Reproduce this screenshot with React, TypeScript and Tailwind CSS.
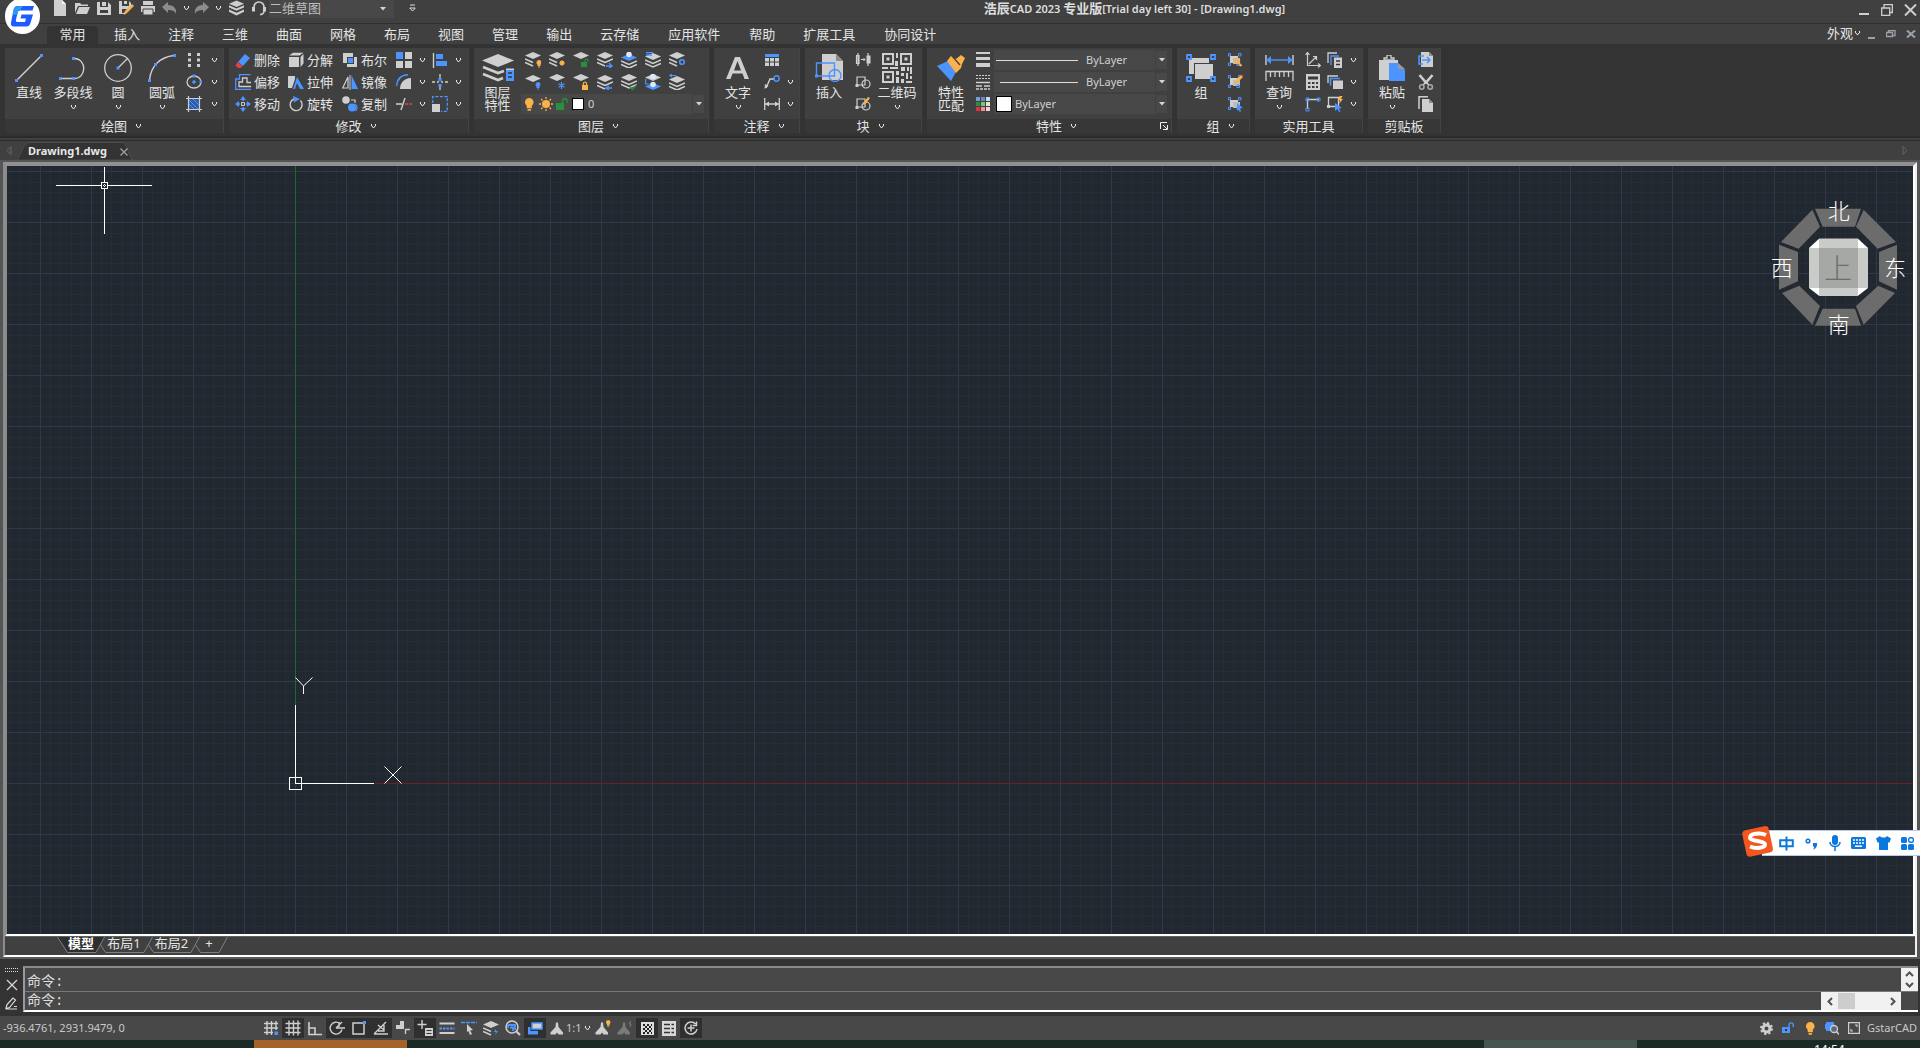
import React from "react";

type Kids = { children?: React.ReactNode };

const L = "#cfcfcf";
const B = "#4c94ff";
const O = "#fbb24a";
const G = "#25913a";
const R = "#e0414b";

function Svg({ w = 16, h = 16, box, children }: { w?: number; h?: number; box?: string } & Kids) {
  return (
    <svg width={w} height={h} viewBox={box ?? `0 0 ${w} ${h}`} fill="none" className="shrink-0" aria-hidden="true">
      {children}
    </svg>
  );
}

const Chevron = () => (
  <Svg w={7} h={5}>
    <path d="M1 .5h1M5 .5h1M1 1l2.500 3L6 1" stroke="#ececec" strokeWidth="1" />
  </Svg>
);
const Arrow = () => (
  <Svg w={6} h={4}>
    <path d="M0 0h6L3 3.500z" fill="#d6d6d6" />
  </Svg>
);

/* ---------- layer stack variants ---------- */
function Stack({ y = 0, short = false, top = L, lines = true }: { y?: number; short?: boolean; top?: string; lines?: boolean }) {
  return (
    <g transform={`translate(0 ${y})`}>
      <path d="M8 0l8 3.500L8 7 0 3.500z" fill={top} />
      {lines && (
        <path
          d={short ? "M0 7l8 3.500M0 10.500l8 3.500" : "M0 7l8 3.500 8-3.500M0 10.500l8 3.500 8-3.500"}
          stroke={L}
          strokeWidth="1.600"
        />
      )}
    </g>
  );
}
const Bulb = ({ x, y, c = O, s = 1 }: { x: number; y: number; c?: string; s?: number }) => (
  <g transform={`translate(${x} ${y}) scale(${s})`}>
    <path d="M2.500 0a2.500 2.500 0 0 1 1.500 4.500V6H1V4.500A2.500 2.500 0 0 1 2.500 0z" fill={c} />
    <path d="M1.500 6.500h2v1h-2z" fill={c} />
  </g>
);
const layerIcons: { name: string; art: React.ReactNode }[] = [
  { name: "关闭图层", art: <><Stack short /><Bulb x={11.500} y={8} /></> },
  { name: "冻结图层", art: <><Stack short /><circle cx="13" cy="11" r="2" fill={O} /><path d="M13 8v6M10 11h6M11 9l4 4M15 9l-4 4" stroke={O} /></> },
  { name: "解锁图层", art: <><Stack lines={false} /><path d="M8 10h6v5H8z" fill={G} /><path d="M12 10V8.500a1.500 1.500 0 0 1 3 0V10" stroke={G} strokeWidth="1.200" /></> },
  { name: "设为当前", art: <><Stack short /><path d="M8 10.500l8-3.500" stroke={L} strokeWidth="1.600" /><path d="M9 14h5M12 11l3 3-3 2" stroke={B} strokeWidth="1.500" /></> },
  { name: "图层隔离", art: <><Stack y={2} top={B} /><circle cx="8" cy="2.500" r="2.800" fill="#dbe9fb" /></> },
  { name: "图层浏览", art: <><Stack y={1} /><path d="M1 .7h7M1 3h6" stroke={B} strokeWidth="1.300" /></> },
  { name: "图层设置", art: <><Stack short /><circle cx="13" cy="10" r="2.300" stroke={B} strokeWidth="1.600" /></> },
  { name: "打开图层", art: <><Stack lines={false} y={1} /><Bulb x={10.500} y={8} c={B} /></> },
  { name: "解冻图层", art: <><Stack lines={false} y={0} /><path d="M12.500 8v7M9.500 9.700l6 3.500M15.500 9.700l-6 3.500" stroke={B} strokeWidth="1.200" /></> },
  { name: "锁定图层", art: <><Stack lines={false} /><path d="M9 11h6v5H9z" fill={O} /><path d="M10.500 11V9.500a1.500 1.500 0 0 1 3 0V11" stroke={O} strokeWidth="1.200" /></> },
  { name: "上一个图层", art: <><Stack y={1} short /><path d="M8 11.500l8-3.500" stroke={L} strokeWidth="1.600" /><path d="M15 14h-5M12 12l-3 2 3 2" stroke={B} strokeWidth="1.500" /></> },
  { name: "图层匹配", art: <><Stack /><path d="M9 13l2.500 2.500L16 10.500" stroke={G} strokeWidth="1.500" /></> },
  { name: "取消隔离", art: <><Stack y={0} lines={false} /><Stack y={9} lines={false} top={B} /><circle cx="8" cy="2.500" r="2.800" fill="#dbe9fb" /><circle cx="8" cy="10.500" r="2.800" fill="#dbe9fb" /><path d="M.7 5v5h3" stroke={B} strokeWidth="1.200" /></> },
  { name: "合并图层", art: <><Stack y={2} /><path d="M1 1.500h6M3 0L1 1.500 3 3" stroke={B} strokeWidth="1.200" /></> },
];

/* ---------- ribbon building blocks ---------- */
function Panel({ title, width, arrow = true, corner = false, children }: { title: string; width: string; arrow?: boolean; corner?: boolean } & Kids) {
  return (
    <section className={`${width} shrink-0 flex flex-col border-r border-[#444] bg-[#404040]`} aria-label={title}>
      <div className="flex h-[72px] pt-px">{children}</div>
      <div className="flex h-[14px] items-center bg-[#373737] leading-[14px]">
        <span className="w-4" />
        <button className="flex flex-1 items-center justify-center whitespace-nowrap">
          {title}
          {arrow && <span className="-mr-[15px] ml-2"><Chevron /></span>}
        </button>
        <span className="flex w-4 justify-end pr-[3px]">
          {corner && (
            <Svg w={8} h={8}>
              <path d="M.5 7V.5H7M3 3l4 4M7.500 3v4.500H3" stroke="#eee" />
            </Svg>
          )}
        </span>
      </div>
    </section>
  );
}
function Big({ label, second, arrow = true, width = "w-12", children }: { label: string; second?: string; arrow?: boolean; width?: string } & Kids) {
  return (
    <button className={`${width} flex shrink-0 flex-col items-center whitespace-nowrap leading-[13px]`}>
      <span className="flex h-[37px] items-center">{children}</span>
      <span>{label}{second && <br />}{second}</span>
      {!second && arrow && <span className="flex h-4 items-center"><Chevron /></span>}
    </button>
  );
}
function Col({ width = "w-5", children }: { width?: string } & Kids) {
  return <div className={`${width} flex shrink-0 flex-col`}>{children}</div>;
}
function Small({ name, label, children }: { name: string; label?: boolean } & Kids) {
  return (
    <button aria-label={name} className={label ? "flex h-[22px] items-center gap-[3px] whitespace-nowrap pl-px" : "flex h-[22px] items-center justify-center"}>
      {children}
      {label && <span className="leading-[14px]">{name}</span>}
    </button>
  );
}
const Drop = ({ name }: { name: string }) => (
  <Small name={name}><Chevron /></Small>
);

function Combo({ name, value, children }: { name: string; value: string } & Kids) {
  return (
    <div className="flex h-[22px] w-full items-center gap-px">
      <label className="flex h-5 flex-1 items-center bg-[#484848] pl-[2px]">
        {children}
        <select aria-label={name} className="min-w-0 flex-1 appearance-none bg-transparent text-[11px] text-[#d0d0d0] outline-none">
          <option>{value}</option>
        </select>
      </label>
      <span className="flex h-[18px] w-[11px] items-center justify-center bg-[#484848]"><Arrow /></span>
    </div>
  );
}

function DrawPanel() {
  return (
    <Panel title="绘图" width="w-[219px]">
      <Big label="直线" arrow={false}>
        <Svg w={28} h={28}><path d="M2 26L26 2" stroke={L} strokeWidth="1.400" /><path d="M0 25h3v3H0zM25 0h3v3h-3z" fill={B} /></Svg>
      </Big>
      <Big label="多段线" width="w-10">
        <Svg w={28} h={28}><path d="M2 24.500h13c13 0 13-20 0-20" stroke={L} strokeWidth="1.400" /><path d="M0 23h3v3H0zM13 23h3v3h-3zM13 3h3v3h-3z" fill={B} /></Svg>
      </Big>
      <Big label="圆" width="w-[50px]">
        <Svg w={28} h={28}><circle cx="14" cy="14" r="13.300" stroke={L} strokeWidth="1.300" /><path d="M14 14L24 4" stroke={L} strokeWidth="1.300" /><path d="M12.500 12.500h3v3h-3z" fill={B} /></Svg>
      </Big>
      <Big label="圆弧" width="w-[38px]">
        <Svg w={28} h={28}><path d="M1.500 26C3 12 12 3 26 1.500" stroke={L} strokeWidth="1.400" /><path d="M0 25h3v3H0zM6 9h3v3H6zM25 0h3v3h-3z" fill={B} /></Svg>
      </Big>
      <Col width="w-[26px]">
        <Small name="多点"><Svg><path d="M2 1h3v3H2zM11 1h3v3h-3zM2 6.500h3v3H2zM11 6.500h3v3h-3zM2 12h3v3H2zM11 12h3v3h-3z" fill={L} /></Svg></Small>
        <Small name="椭圆"><Svg><ellipse cx="8" cy="8" rx="7" ry="6" stroke={L} strokeWidth="1.300" /><path d="M6.500.5h3v3h-3zM13.500 6.500h2.500v3h-2.500zM7.300 6h1.400v4H7.300zM6 7.300h4v1.400H6z" fill={B} /></Svg></Small>
        <Small name="填充"><Svg><path d="M3 3h10v10H3z" fill="#2e5da8" /><path d="M3 4l9 9M3 8l5 5M7 3l6 6" stroke={B} /><path d="M2.500 0v16M13.500 0v16M0 2.500h16M0 13.500h16" stroke={L} strokeWidth="1.200" /></Svg></Small>
      </Col>
      <Col width="w-[14px]"><Drop name="多点选项" /><Drop name="椭圆选项" /><Drop name="填充选项" /></Col>
    </Panel>
  );
}

function ModifyPanel() {
  return (
    <Panel title="修改" width="w-[240px]">
      <div className="flex pl-[5px]">
        <Col width="w-[53px]">
          <Small label name="删除"><Svg><path d="M10 2l5 4-7 8-5-4z" fill={B} /><path d="M2.500 10l5 4-2 2H3l-2.500-2.500z" fill={R} /></Svg></Small>
          <Small label name="偏移"><Svg><path d="M15.500 .7H4.500V5H.7v10.300h15.300" stroke={B} strokeWidth="1.300" /><path d="M16 12.500H4V8h3.500V4H12v4.500h4" stroke={L} strokeWidth="1.300" /></Svg></Small>
          <Small label name="移动"><Svg><path d="M8 1v4M8 11v4M1 8h4M11 8h4" stroke={B} strokeWidth="1.500" /><path d="M8 0l3 4H5zM8 16l3-4H5zM0 8l4-3v6zM16 8l-4-3v6z" fill={B} /><path d="M6.500 6.500h3v3h-3z" stroke={L} /></Svg></Small>
        </Col>
        <Col width="w-[54px]">
          <Small label name="分解"><Svg><path d="M1 5h10v10H1z" fill={L} /><path d="M1 3.500L5 .7h10.500L11.500 3.500zM12.500 5L15.500 2v9.500L12.500 15z" fill={L} /></Svg></Small>
          <Small label name="拉伸"><Svg><path d="M0 2h7v3L4 14H0z" fill={L} /><path d="M9 3l7 12h-4L9 9l-2 6H5z" fill={B} /></Svg></Small>
          <Small label name="旋转"><Svg><path d="M6 3a6 6 0 1 0 6.500 1.500" stroke={L} strokeWidth="1.400" /><path d="M5 0l7 3-6 3.500z" fill={B} /></Svg></Small>
        </Col>
        <Col width="w-[54px]">
          <Small label name="布尔"><Svg><path d="M1 1h10v4H5v6H1zM12 5h3v10H5v-3h7z" fill={L} /><path d="M6 6h5v5H6z" fill={B} /></Svg></Small>
          <Small label name="镜像"><Svg><path d="M6 3v11H.7z" stroke={L} strokeWidth="1.200" /><path d="M8 1v15" stroke={L} /><path d="M9.500 1L16 15H9.500z" fill={B} /></Svg></Small>
          <Small label name="复制"><Svg><circle cx="4" cy="4" r="3.800" fill={L} /><path d="M9 4h4v3" stroke={L} strokeWidth="1.200" /><circle cx="10" cy="11.500" r="4" fill={B} /><path d="M13 8a4 4 0 0 1 0 7" stroke={B} strokeWidth="1.200" /></Svg></Small>
        </Col>
        <Col width="w-[18px]">
          <Small name="阵列"><Svg><path d="M0 0h7v7H0z" fill={B} /><path d="M9 0h7v7H9zM0 9h7v7H0zM9 9h7v7H9z" fill={L} /></Svg></Small>
          <Small name="圆角"><Svg><path d="M.7 12C1 5 5 1 12 .7" stroke={B} strokeWidth="1.400" /><path d="M4 15c0-6 4-11 11-11v11z" fill={L} /></Svg></Small>
          <Small name="修剪"><Svg><path d="M0 8h6M5 14L9 2" stroke={L} strokeWidth="1.400" /><path d="M9 8h3M13 8h3" stroke={R} strokeWidth="1.400" /></Svg></Small>
        </Col>
        <Col width="w-[19px]"><Drop name="阵列选项" /><Drop name="圆角选项" /><Drop name="修剪选项" /></Col>
        <Col width="w-[16px]">
          <Small name="对齐"><Svg><path d="M1.500 1v15" stroke={L} strokeWidth="1.400" /><path d="M4 2h7v5H4zM4 9h11v5H4z" fill={B} /></Svg></Small>
          <Small name="打断"><Svg><path d="M8 0v4M8 12v4M0 8h3M5 8h2M9 8h2M13 8h3" stroke={L} strokeWidth="1.300" /><path d="M6.500 4h3v3h-3zM6.500 10h3v3h-3z" fill={B} /></Svg></Small>
          <Small name="缩放"><Svg><path d="M.7 7V.7h14.600v14.600H9" stroke={B} strokeWidth="1.300" strokeDasharray="3 1.500" /><path d="M0 8h8v8H0z" fill={L} /></Svg></Small>
        </Col>
        <Col width="w-[20px]"><Drop name="对齐选项" /><Drop name="打断选项" /><Drop name="缩放选项" /></Col>
      </div>
    </Panel>
  );
}

const Sun = () => (
  <Svg w={14} h={14}>
    <circle cx="7" cy="7" r="4" fill={O} />
    <path d="M7 0v2M7 12v2M0 7h2M12 7h2M2 2l1.500 1.500M10.500 10.500L12 12M12 2l-1.500 1.500M3.500 10.500L2 12" stroke={O} strokeWidth="1.300" />
  </Svg>
);

function LayerPanel() {
  return (
    <Panel title="图层" width="w-[235px]">
      <Big label="图层" second="特性" width="w-[47px]">
        <Svg w={32} h={28}>
          <path d="M16 0l16 6.500L16 13 0 6.500z" fill={L} />
          <path d="M1 13l15 6 6-2M1 20l15 6 5-2" stroke={L} strokeWidth="2.600" />
          <path d="M24 15h8v12h-8z" fill={B} /><path d="M24 14.500h8v1.500h-8z" fill={L} />
          <path d="M26 19h4M26 23h4" stroke="#333" strokeWidth="1.500" />
        </Svg>
      </Big>
      <div className="flex flex-1 flex-col pr-1">
        <div className="grid w-[168px] grid-cols-7">
          {layerIcons.map((i) => (
            <Small key={i.name} name={i.name}><Svg>{i.art}</Svg></Small>
          ))}
        </div>
        <Combo name="当前图层" value="0">
          <span className="mr-1 flex shrink-0 items-center gap-[3px] pl-[2px]">
            <Svg w={11} h={13}><Bulb x={0} y={0} s={1.700} /></Svg>
            <Sun />
            <Svg w={12} h={12}><path d="M0 5h8v7H0z" fill={G} /><path d="M6.500 5V3a2.300 2.300 0 0 1 4.600 0v2" stroke={G} strokeWidth="1.400" /></Svg>
            <span className="ml-px h-3 w-3 shrink-0 border border-black bg-white" />
          </span>
        </Combo>
      </div>
    </Panel>
  );
}

function AnnotatePanel() {
  return (
    <Panel title="注释" width="w-[86px]">
      <Big label="文字">
        <Svg w={24} h={24}><path d="M9 1h5l9 22h-4.500l-2-5.500h-10L4.500 23H0zM11.500 5L8 14.500h7z" fill={L} /></Svg>
      </Big>
      <Col width="w-[20px]">
        <Small name="表格"><Svg w={14} h={12}><path d="M0 0h14v3H0z" fill={B} /><path d="M0 4h4v3.500H0zM5 4h4v3.500H5zM10 4h4v3.500h-4zM0 8.500h4V12H0zM5 8.500h4V12H5zM10 8.500h4V12h-4z" fill={L} /></Svg></Small>
        <Small name="引线"><Svg><path d="M2 14l4-9h5" stroke={L} strokeWidth="1.400" /><path d="M.5 15l.5-5 3.500 2z" fill={L} /><circle cx="12.500" cy="4.500" r="2.700" stroke={B} strokeWidth="1.400" /></Svg></Small>
        <Small name="标注"><Svg><path d="M.7 2v12M15.300 2v12M1 8h14" stroke={L} strokeWidth="1.300" /><path d="M1 8l4-2.500v5zM15 8l-4-2.500v5z" fill={L} /></Svg></Small>
      </Col>
      <Col width="w-[16px]"><span className="h-[22px]" /><Drop name="引线选项" /><Drop name="标注选项" /></Col>
    </Panel>
  );
}

const ShapePair = ({ pen = false }: { pen?: boolean }) => (
  <Svg>
    <path d="M2 3h8v8H2z" stroke={L} strokeWidth="1.200" />
    <circle cx="11" cy="10" r="4" stroke={L} strokeWidth="1.200" />
    <path d="M.5 10h3v3h-3z" fill={L} />
    {pen && <path d="M8 9l1-3 4-5 2 1-4 5.500z" fill={O} />}
  </Svg>
);

function BlockPanel() {
  return (
    <Panel title="块" width="w-[117px]">
      <Big label="插入" arrow={false}>
        <Svg w={28} h={28}>
          <path d="M7 0h14l7 7v19H7z" fill={L} /><path d="M21 0l7 7h-7z" fill="#8d8d8d" />
          <path d="M1.500 9h18v13h-18z" stroke={B} strokeWidth="1.400" /><circle cx="20" cy="21.500" r="6" stroke={B} strokeWidth="1.400" />
          <path d="M0 20.500h3v3H0z" fill={B} />
        </Svg>
      </Big>
      <Col width="w-[20px]">
        <Small name="替换块"><Svg><path d="M1.500 3.500h2.500v8H1.500zM3 1v13M13 1v13" stroke={L} strokeWidth="1.200" /><path d="M11.500 3.500h4v8h-4z" fill={L} /><path d="M6 7.500h4M8.500 6l1.500 1.500L8.500 9" stroke={L} /></Svg></Small>
        <Small name="创建块"><ShapePair /></Small>
        <Small name="编辑块"><ShapePair pen /></Small>
      </Col>
      <Big label="二维码">
        <Svg w={30} h={30}>
          <path d="M1 1h10v10H1zM19 1h10v10H19zM1 19h10v10H1z" stroke={L} strokeWidth="2" />
          <path d="M4.500 4.500h3v3h-3zM22.500 4.500h3v3h-3zM4.500 22.500h3v3h-3zM14 0h2v5h-2zM13 8h3v5h-3zM0 14h6v2H0zM8 14h8v2H8zM14 18h3v4h-3zM19 14h4v4h-4zM25 14h2v4h-2zM28 14h2v7h-2zM19 20h3v3h-3zM24 20h2v6h-2zM14 24h3v6h-3zM19 26h3v4h-3zM24 28h6v2h-6zM28 23h2v3h-2z" fill={L} />
        </Svg>
      </Big>
    </Panel>
  );
}

const swatches = ["#7b9bd0", "#6a86c0", "#c8d8f5", "#25913a", "#80c080", "#d5f0c8", "#e0323c", "#f09090", "#f8d0d0"];

function PropertiesPanel() {
  return (
    <Panel title="特性" width="w-[245px]" corner>
      <Big label="特性" second="匹配">
        <Svg w={28} h={26}>
          <path d="M0 11l11-5 9 9-6 11z" fill={B} />
          <path d="M10 6l4-5 5 3 5-4 4 3-3 6-1 4-5 5z" fill={O} /><path d="M15 1l8 9" stroke="#404040" strokeWidth="1.200" />
        </Svg>
      </Big>
      <Col width="w-[16px]">
        <Small name="线宽"><Svg w={14} h={16}><path d="M0 0h14v2H0zM0 5h14v3H0zM0 11h14v4H0z" fill={L} /></Svg></Small>
        <Small name="线型"><Svg w={14} h={16}><path d="M0 1.500h14M0 4.500h14" stroke={L} strokeWidth="1.200" strokeDasharray="2 1" /><path d="M0 8.500h14" stroke={L} strokeWidth="1.500" /><path d="M0 12h14" stroke={L} strokeDasharray="6 2" strokeWidth="1.500" /><path d="M0 15h14" stroke={L} strokeDasharray="3 1" strokeWidth="1.500" /></Svg></Small>
        <Small name="颜色"><Svg w={14} h={14}>{swatches.map((c, i) => <rect key={c} x={(i % 3) * 5} y={Math.floor(i / 3) * 5} width="4" height="4" fill={c} />)}</Svg></Small>
      </Col>
      <div className="ml-[3px] mr-1 flex flex-1 flex-col">
        <Combo name="线宽" value="ByLayer"><span className="mr-2 h-px w-[82px] bg-[#dcdcdc]" /></Combo>
        <Combo name="线型" value="ByLayer"><span className="ml-1 mr-2 h-px w-[78px] bg-[#dcdcdc]" /></Combo>
        <Combo name="颜色" value="ByLayer"><span className="mr-[3px] h-4 w-4 border border-black bg-white" /></Combo>
      </div>
    </Panel>
  );
}

const MiniGroup = ({ kind }: { kind: "find" | "edit" | "pick" }) => (
  <Svg>
    <path d="M3 4h8v7H3z" fill={L} /><path d="M6 6h7v6H6z" fill="#bdbdbd" />
    <path d="M1.500 1.500h2V4h-2zM11.500 1.500H14V4h-2.500zM1.500 11h2v2.500h-2zM10 11h2.500v2.500H10z" stroke={B} />
    {kind === "find" && <><circle cx="10" cy="9" r="2.500" stroke={O} strokeWidth="1.500" /><path d="M11.500 11l3 3" stroke={O} strokeWidth="2" /></>}
    {kind === "edit" && <><path d="M7 10l1-3 6-6 2 2-6 6z" fill={O} /><path d="M13.500 1.500L15 0l1 1.500-1 1z" fill={R} /></>}
    {kind === "pick" && <path d="M10 7l6 5-3 .5 1 3-1.500.5-1-3L10 15z" fill={B} />}
  </Svg>
);

function GroupPanel() {
  return (
    <Panel title="组" width="w-[73px]">
      <Big label="组" arrow={false}>
        <Svg w={30} h={28}>
          <path d="M3 4h20v5H8v11H3z" fill={L} /><path d="M9 10h18v15H9z" fill={L} />
          <path d="M1 1h4v4H1zM25 1h4v4h-4zM1 23h4v4H1zM25 23h4v4h-4z" fill="#404040" stroke={B} strokeWidth="1.800" />
        </Svg>
      </Big>
      <Col width="w-[20px]">
        <Small name="解除编组"><MiniGroup kind="find" /></Small>
        <Small name="组编辑"><MiniGroup kind="edit" /></Small>
        <Small name="组选择"><MiniGroup kind="pick" /></Small>
      </Col>
    </Panel>
  );
}

function UtilityPanel() {
  return (
    <Panel title="实用工具" width="w-[108px]" arrow={false}>
      <Big label="查询">
        <Svg w={29} h={28}>
          <path d="M1 1v10M28 1v10" stroke={L} strokeWidth="1.400" /><path d="M3 6h23" stroke={B} strokeWidth="1.400" /><path d="M1 6l5-4v8zM28 6l-5-4v8z" fill={B} />
          <path d="M1 27v-9.500h27V27M5.500 18v5M10 18v5M14.500 18v5M19 18v5M23.500 18v5" stroke={L} strokeWidth="1.300" />
        </Svg>
      </Big>
      <Col width="w-[20px]">
        <Small name="坐标"><Svg><path d="M2.500 1v12.500H15M4 12l7-7M8 4.500h3.500V8M.5 3l2-2.500 2 2.500M13 11.500l2.500 2-2.500 2" stroke={L} strokeWidth="1.200" /></Svg></Small>
        <Small name="计算器"><Svg><path d="M1 0h14v16H1z" fill={L} /><path d="M3 2.500h10v3H3zM3 8h2.500v2H3zM7 8h2.500v2H7zM11 8h2v2h-2zM3 12h2.500v2H3zM7 12h2.500v2H7zM11 12h2v2h-2z" fill="#3a3a3a" /></Svg></Small>
        <Small name="点样式"><Svg><path d="M2.500 13V3.500H14" stroke={L} strokeWidth="1.300" /><path d="M1 2h3v3H1zM12 2h3v3h-3zM1 12h3v3H1z" stroke={B} /></Svg></Small>
      </Col>
      <Col width="w-[24px]">
        <Small name="选择过滤"><Svg><path d="M1 11V1h9" stroke={L} strokeWidth="1.300" /><path d="M4 13V4h8" stroke={B} strokeWidth="1.300" /><path d="M7 5.500h8V16H7z" fill={L} /><path d="M9 9h4M9 12.500h4" stroke="#333" strokeWidth="1.500" /></Svg></Small>
        <Small name="绘图次序"><Svg><path d="M1 9V2h10" stroke={L} strokeWidth="1.300" /><path d="M3.500 11.500V4.500H13" stroke={B} strokeWidth="1.600" /><path d="M6 6.500h10V15H6z" fill={L} /></Svg></Small>
        <Small name="快速选择"><Svg><path d="M1.500 1.500h10v9h-10z" stroke={L} strokeWidth="1.300" /><path d="M0 9h3v3H0z" fill={L} /><path d="M12.500 0h3l-1.500 3h2l-4 5 1-4h-2z" fill={O} /><path d="M8 7l7 5-3 .5 1.500 3-1.500.5-1.500-3L8 15z" fill={B} /></Svg></Small>
      </Col>
      <Col width="w-[13px]"><Drop name="选择过滤选项" /><Drop name="绘图次序选项" /><Drop name="快速选择选项" /></Col>
    </Panel>
  );
}

function ClipboardPanel() {
  return (
    <Panel title="剪贴板" width="w-[73px]" arrow={false}>
      <Big label="粘贴">
        <Svg w={26} h={26}>
          <path d="M0 5h19v4h-9v16H0z" fill={L} /><path d="M5 5V3h3V0h4v3h3v2z" stroke={L} strokeWidth="1.300" fill="#404040" />
          <path d="M10 8h9l7 7v11H10z" fill={B} /><path d="M19 8l7 6h-7z" fill="#9a9a9a" />
        </Svg>
      </Big>
      <Col width="w-[20px]">
        <Small name="链接复制"><Svg><path d="M3 0h8l4 4v11H3z" fill={L} /><path d="M11 0l4 4h-4z" fill="#8d8d8d" /><path d="M6 4H1v8h4M4 8h8M9 5l3 3-3 3" stroke={B} strokeWidth="1.600" /></Svg></Small>
        <Small name="剪切"><Svg><path d="M1.500 1L8 8.500 14.500 1" stroke={L} strokeWidth="2.600" /><path d="M8 8l-3 3M8 8l3 3" stroke={L} strokeWidth="1.600" /><circle cx="3.800" cy="13" r="2.200" stroke="#a8a8a8" strokeWidth="1.600" /><circle cx="12.200" cy="13" r="2.200" stroke="#a8a8a8" strokeWidth="1.600" /></Svg></Small>
        <Small name="复制剪贴"><Svg><path d="M1 13V.7h9" stroke={L} strokeWidth="1.500" /><path d="M4 3h7l4 4v9H4z" fill={L} /><path d="M11 3l4 4h-4z" fill="#8d8d8d" /></Svg></Small>
      </Col>
    </Panel>
  );
}

/* ---------- title bar ---------- */
function QuickButton({ name, width = "w-[22px]", children }: { name: string; width?: string } & Kids) {
  return <button aria-label={name} className={`${width} flex h-4 shrink-0 items-center justify-center`}>{children}</button>;
}

function TitleBar() {
  return (
    <header className="flex h-[23px] items-start pl-[49px]">
      <QuickButton name="新建"><Svg><path d="M2 0h8l4 4v12H2z" fill={L} /><path d="M10 0l4 4h-4z" fill="#f0f0f0" /></Svg></QuickButton>
      <QuickButton name="打开"><Svg><path d="M1 13V3h5l1.500 1.500H14V6H4z" fill={L} /><path d="M5 7h11l-3 7H2z" fill={L} /></Svg></QuickButton>
      <QuickButton name="保存"><Svg><path d="M1 2h3v5h8V2l3 3v10H1z" fill={L} /><path d="M6 2h4v4H6z" fill={L} /><path d="M4 10h8v3H4z" fill="#404040" /></Svg></QuickButton>
      <QuickButton name="另存为"><Svg><path d="M1 1h3v5h7V1l2 2v3l-6 8H1z" fill={L} /><path d="M6 1h3v3H6z" fill={L} /><path d="M4 9h5l-3 4H4z" fill="#404040" /><path d="M6 15l1-4 7-7 2 2-7 7z" fill={O} /></Svg></QuickButton>
      <QuickButton name="打印"><Svg><path d="M3 1h10v4H3zM1 6h14v6H1z" fill={L} /><path d="M3 9h10v6H3z" fill={L} stroke="#404040" /></Svg></QuickButton>
      <QuickButton name="放弃"><Svg><path d="M0 7l6-5v3c6 0 9 4 8 9-1-3-4-4-8-4v3z" fill="#8c8c8c" /></Svg></QuickButton>
      <QuickButton name="放弃列表" width="w-[10px]"><Chevron /></QuickButton>
      <QuickButton name="重做"><Svg><path d="M15 7L9 2v3c-6 0-9 4-8 9 1-3 4-4 8-4v3z" fill="#8c8c8c" /></Svg></QuickButton>
      <QuickButton name="重做列表" width="w-[10px]"><Chevron /></QuickButton>
      <QuickButton name="图层管理" width="w-[26px]"><Svg w={15} h={16} box="0 0 16 16"><path d="M8 0l8 3.500L8 7 0 3.500zM0 5l8 3.500L16 5v2.500L8 11 0 7.500zM0 9.500L8 13l8-3.500V12l-8 4-8-4z" fill={L} /></Svg></QuickButton>
      <QuickButton name="在线支持" width="w-[20px]"><Svg><path d="M3 10V7a5 5 0 0 1 10 0v4c0 2-2 3.500-4 3.500" stroke={L} strokeWidth="1.700" /><path d="M1 7h3v4.500H1zM12 7h3v4.500h-3z" fill={L} /></Svg></QuickButton>
      <label className="flex h-[18px] w-[125px] items-center bg-[#484848] pr-[8px]">
        <select aria-label="工作空间" className="min-w-0 flex-1 appearance-none bg-transparent pb-[2px] text-[13px] leading-4 text-[#bdbdbd] outline-none">
          <option>二维草图</option>
        </select>
        <Arrow />
      </label>
      <QuickButton name="自定义快速访问" width="w-[36px]"><Svg w={7} h={8}><path d="M1 1h5" stroke="#ddd" /><path d="M.7 4h5.600L3.500 7z" stroke="#ddd" /></Svg></QuickButton>
      <h1 className="flex-1 pr-5 text-center text-[13px] font-semibold leading-4 text-[#dedede]">
        浩辰<span className="text-[11px]">CAD 2023 </span>专业版<span className="text-[11px]">[Trial day left 30] - [Drawing1.dwg]</span>
      </h1>
      <div className="flex h-[19px] items-center gap-[11px] pr-[3px]">
        <button aria-label="最小化"><Svg w={11} h={12}><path d="M0 10h10" stroke={L} strokeWidth="2" /></Svg></button>
        <button aria-label="还原"><Svg w={12} h={12}><path d="M.7 4h8v7.300h-8zM3 3.500V.7h8.300v7.800H9" stroke={L} strokeWidth="1.300" /></Svg></button>
        <button aria-label="关闭"><Svg w={13} h={12}><path d="M1 .5l11 11M12 .5l-11 11" stroke={L} strokeWidth="2" /></Svg></button>
      </div>
    </header>
  );
}

const menus = ["常用", "插入", "注释", "三维", "曲面", "网格", "布局", "视图", "管理", "输出", "云存储", "应用软件", "帮助", "扩展工具", "协同设计"];

function MenuBar() {
  return (
    <nav className="flex h-[21px] items-end border-t border-[#303030] pl-[47px] pr-1">
      {menus.map((m, i) => (
        <button
          key={m}
          className={
            i === 0
              ? "h-[18px] w-[51px] rounded-t bg-[#333] pb-[2px] leading-4"
              : i === 1
                ? "h-[18px] pb-[2px] pl-4 pr-[14px] leading-4"
                : m.length > 2
                  ? "h-[18px] pb-[2px] pl-[14px] pr-[15px] leading-4"
                  : "h-[18px] px-[14px] pb-[2px] leading-4"
          }
        >
          {m}
        </button>
      ))}
      <div className="ml-auto flex h-5 items-center">
        <button className="flex items-center gap-px pb-[2px] leading-4">外观<Chevron /></button>
        <div className="flex items-center gap-[10px] pl-[7px] text-[#9aa3ad]">
          <button aria-label="最小化图形"><Svg w={8} h={9}><path d="M0 8h7" stroke="#9aa3ad" strokeWidth="2" /></Svg></button>
          <button aria-label="还原图形"><Svg w={10} h={8}><path d="M.5 2.500h6v4h-6zM2.500 2V.7h6.500v4.800H7" stroke="#9aa3ad" strokeWidth="1.300" /></Svg></button>
          <button aria-label="关闭图形"><Svg w={10} h={8}><path d="M1 .5l8 7M9 .5l-8 7" stroke="#9aa3ad" strokeWidth="2" /></Svg></button>
        </div>
      </div>
    </nav>
  );
}

/* ---------- drawing area ---------- */
function Grid() {
  return (
    <svg className="absolute inset-0 h-full w-full" shapeRendering="crispEdges" aria-hidden="true">
      <defs>
        <pattern id="grid" x="33" y="5" width="51" height="51" patternUnits="userSpaceOnUse">
          <path d="M10 0h1v51h-1zM20 0h1v51h-1zM31 0h1v51h-1zM41 0h1v51h-1zM0 11h51v1H0zM0 21h51v1H0zM0 31h51v1H0zM0 41h51v1H0z" fill="#262d38" />
          <path d="M0 0h1v51H0zM0 0h51v1H0z" fill="#30384c" />
        </pattern>
      </defs>
      <rect width="100%" height="100%" fill="url(#grid)" />
      <rect x="288" y="0" width="1" height="617" fill="#1c6b22" />
      <rect x="288" y="617" width="100%" height="1" fill="#6b2226" />
      <rect x="288" y="539" width="1" height="78" fill="#fff" />
      <rect x="288" y="617" width="79" height="1" fill="#fff" />
      <rect x="282.500" y="611.500" width="12" height="12" fill="none" stroke="#fff" />
      <path d="M288.500 511.500l8 8.500 9-8.500M296.500 520v8M377.500 600.500l17 17M394.500 600.500l-17 17" stroke="#fff" fill="none" shapeRendering="auto" />
      <path d="M49 19h45v1H49zM101 19h44v1h-44zM97 1h1v16h-1zM97 23h1v45h-1z" fill="#fff" />
      <path d="M94.500 16.500h6v6h-6zM96 19.500h1M98 19.500h1M97.500 18v1M97.500 20v1" stroke="#fff" fill="none" />
    </svg>
  );
}

function Compass() {
  return (
    <svg width="145" height="150" viewBox="135 40 435 450" className="absolute right-[3px] top-[27px]" role="img" aria-label="视图方向">
      <g fill="#6c6c6c">
        <path d="M285 87h138l-18 54H308zM285 438h138l-18-51H308z" />
        <path d="M177 195l57 22v88l-57 25zM531 195l-54 22v88l54 25z" />
        <path d="M277 90l23 51-64 66-53-20zM431 90l-23 51 65 66 55-20z" />
        <path d="M277 435l23-56-62-61-52 22zM431 435l-23-56 67-61 50 22z" />
      </g>
      <path d="M297 177h117l30 28v120l-30 23H297l-30-23V205z" fill="#fff" />
      <path d="M297 177h117v171H297zM267 205h177v120H267z" fill="#c9cbc9" />
      <path d="M297 205h117v120H297z" fill="#a6a8a6" />
      <g fontFamily="'Noto Sans CJK SC', sans-serif" fontWeight="300" fontSize="66" textAnchor="middle" fill="#fff">
        <text x="356" y="118">北</text>
        <text x="356" y="461">南</text>
        <text x="185" y="288">西</text>
        <text x="526" y="288">东</text>
        <text x="354" y="298" fontSize="84" fill="#6c6e6c">上</text>
      </g>
    </svg>
  );
}

function InputMethodBar() {
  const c = "#0a78dc";
  return (
    <div className="absolute -right-[7px] bottom-[78px] z-10 flex h-[26px] w-[158px] items-center justify-between border-y border-[#b9cbe6] bg-white pl-[17px] pr-[6px]">
      <span className="absolute -left-[21px] -top-[6px]">
        <Svg w={34} h={34}>
          <rect x="3" y="3" width="27" height="27" rx="4" fill="#f2571f" transform="rotate(-12 16 16)" />
          <path d="M25 10c-6-3-16-1-16 2.500 0 4 15 3 15 7 0 3.500-9 4.500-15 2" stroke="#fff" strokeWidth="4" fill="none" />
        </Svg>
      </span>
      <button aria-label="中文"><Svg w={15} h={15}><path d="M1.200 4.200h12.600v6H1.200zM7.500 .5v14" stroke={c} strokeWidth="2" /></Svg></button>
      <button aria-label="标点"><Svg w={15} h={15}><circle cx="4" cy="5" r="1.800" stroke={c} strokeWidth="1.500" /><path d="M9 7h4c.5 3-1 6-4 6.500 1-1 1.500-2 1-3H9z" fill={c} /></Svg></button>
      <button aria-label="语音"><Svg w={12} h={16}><rect x="3" y="0" width="6" height="10" rx="3" fill={c} /><path d="M1 7c0 6 10 6 10 0M6 12v4" stroke={c} strokeWidth="1.600" /></Svg></button>
      <button aria-label="键盘"><Svg w={15} h={12}><rect width="15" height="12" rx="1.500" fill={c} /><path d="M2 3h11M2 6h11" stroke="#fff" strokeWidth="1.500" strokeDasharray="2 1" /><path d="M4 9.200h7" stroke="#fff" strokeWidth="1.500" /></Svg></button>
      <button aria-label="皮肤"><Svg w={15} h={14}><path d="M4 0c1 2 6 2 7 0l4 2.500-1.500 4H12V14H3V6.500H1.500L0 2.500z" fill={c} /></Svg></button>
      <button aria-label="工具箱"><Svg w={13} h={13}><rect width="6" height="6" rx="1.500" fill={c} /><rect y="7" width="6" height="6" rx="1.500" fill={c} /><rect x="7" y="7" width="6" height="6" rx="1.500" fill={c} /><rect x="7.700" y=".7" width="4.600" height="4.600" rx="1.500" stroke={c} strokeWidth="1.400" /></Svg></button>
    </div>
  );
}

function LayoutTabs() {
  const tabs = [
    { t: "模型", w: 48, box: "z-40 w-12 font-bold text-white" },
    { t: "布局1", w: 58, box: "z-30 -ml-[10px] w-[58px]" },
    { t: "布局2", w: 57, box: "z-20 -ml-[10px] w-[57px]" },
    { t: "+", w: 38, box: "z-10 -ml-[10px] w-[38px]" },
  ];
  return (
    <div className="flex h-[19px] border-t border-[#606060] bg-[#404040] pl-[52px]">
      {tabs.map((tab, i) => (
        <button key={tab.t} className={`${tab.box} relative h-4 pb-[3px] leading-[13px]`}>
          <svg width={tab.w} height="16" className="absolute inset-0" aria-hidden="true">
            <path d={`M.5 0L10.500 15.500H${tab.w - 9}L${tab.w - 0.5} 0`} fill={i === 0 ? "#2e2e2e" : "#404040"} stroke="#808080" />
          </svg>
          <span className="relative">{tab.t}</span>
        </button>
      ))}
    </div>
  );
}

/* ---------- command line ---------- */
function CommandArea() {
  return (
    <div className="mt-[7px] flex h-[46px] shrink-0 pr-[2px]">
      <div className="flex w-[23px] flex-col items-center justify-between pb-[2px] pt-[2px]">
        <Svg w={13} h={4}><path d="M0 .5h13M0 3.500h13" stroke="#ddd" strokeDasharray="1 1" /></Svg>
        <button aria-label="关闭命令行"><Svg w={12} h={12}><path d="M1 1l10 10M11 1L1 11" stroke="#d8d8d8" strokeWidth="1.300" /></Svg></button>
        <button aria-label="命令行设置"><Svg w={13} h={13}><path d="M1 11.500l1-4L8 1l2.500 2L4.500 10.500zM1 12h11M9 9.500h3" stroke="#d8d8d8" strokeWidth="1.200" /></Svg></button>
      </div>
      <div className="flex min-w-0 flex-1 flex-col border-b-2 border-l-2 border-t-2 border-b-white border-l-[#9a9a9a] border-t-[#8a8a8a] bg-[#484848] font-['Liberation_Mono','Noto_Sans_CJK_SC',monospace] text-sm text-[#dcdcdc]">
        <div className="flex h-6 border-b border-[#777]">
          <p className="flex-1 pl-[2px] pt-1 leading-5">命令:</p>
          <div className="flex w-[17px] flex-col items-center justify-around bg-[#f0f0f0]">
            <button aria-label="向上滚动" className="flex"><Svg w={9} h={6}><path d="M1 5l3.500-3.500L8 5" stroke="#505050" strokeWidth="2" /></Svg></button>
            <button aria-label="向下滚动" className="flex"><Svg w={9} h={6}><path d="M1 1l3.500 3.500L8 1" stroke="#505050" strokeWidth="2" /></Svg></button>
          </div>
        </div>
        <div className="flex h-[18px] items-center pr-[17px]">
          <label htmlFor="cmd" className="pl-[2px] leading-5">命令:</label>
          <input id="cmd" className="h-4 min-w-0 flex-1 bg-transparent outline-none" />
          <div className="flex h-full w-20 items-center bg-[#f0f0f0]">
            <button aria-label="向左滚动" className="flex w-[17px] justify-center"><Svg w={6} h={9}><path d="M5 1L1.500 4.500 5 8" stroke="#505050" strokeWidth="2" /></Svg></button>
            <span className="h-4 w-[17px] bg-[#cdcdcd]" />
            <button aria-label="向右滚动" className="ml-auto flex w-[17px] justify-center"><Svg w={6} h={9}><path d="M1 1l3.500 3.500L1 8" stroke="#505050" strokeWidth="2" /></Svg></button>
          </div>
        </div>
      </div>
    </div>
  );
}

/* ---------- status bar ---------- */
const Compass2D = ({ c = L }: { c?: string }) => (
  <path d="M6 1.500h2l.5 4.500 4.500 5.500v2H8.500L7 11.500l-1.500 2H.5v-2L5.500 6z" fill={c} />
);
const toggles: { name: string; on?: boolean; art: React.ReactNode }[] = [
  { name: "捕捉", art: <><path d="M4 1v14M8.500 1v14M13 1v9M1 3.500h14M1 8h14M1 12.500h9" stroke={L} strokeWidth="1.400" /><path d="M11.500 11.500h3.500V15h-3.500z" fill={B} /></> },
  { name: "栅格", on: true, art: <path d="M4 .5v15M8.500 .5v15M13 .5v15M.5 3.500h15M.5 8h15M.5 12.500h15" stroke={L} strokeWidth="1.400" /> },
  { name: "正交", art: <path d="M2 2v12.500h13M2 8h6v6" stroke={L} strokeWidth="1.600" /> },
  { name: "极轴", on: true, art: <><path d="M11 3.500A6 6 0 1 0 13 9.500" stroke={L} strokeWidth="1.400" /><path d="M7 8h9M7 8l6-6M10 2v5" stroke={L} strokeWidth="1.300" /></> },
  { name: "对象捕捉", on: true, art: <><path d="M2 3h11v11H2z" stroke={L} strokeWidth="1.500" /><path d="M12 1h3v3h-3z" fill={B} /></> },
  { name: "对象追踪", on: true, art: <path d="M1 14L13 2M1 14h14M5 5l6 5M11 5v6H5" stroke={L} strokeWidth="1.400" /> },
  { name: "动态UCS", art: <><path d="M5 1h4v8H1V5h4z" fill={L} /><path d="M10.500 14V9.500H15" stroke={L} strokeWidth="1.300" /></> },
  { name: "动态输入", on: true, art: <><path d="M5 0v9M.5 4.500h9" stroke={L} strokeWidth="1.400" /><path d="M8 8h8v8H8z" fill={L} /><path d="M9.500 10.500h5M9.500 13.500h5" stroke="#333" /></> },
  { name: "线宽显示", art: <><path d="M.5 3.500h15M.5 13h15" stroke={L} strokeWidth="1.800" /><path d="M.5 8.500h15" stroke={B} strokeWidth="1.800" strokeDasharray="2.500 1" /></> },
  { name: "循环选择", art: <><path d="M0 2.500h16" stroke={B} strokeWidth="1.500" strokeDasharray="4 1" /><path d="M6 4l6 6-3 .5L11 14l-2 1-1.500-4L6 12z" fill={L} /></> },
  { name: "图层状态", art: <><g transform="translate(0 1)"><Stack short /></g><path d="M13 9l-2 3h2l-1 3 3-4h-2z" fill={B} /></> },
  { name: "快速查看", art: <><circle cx="7" cy="7" r="6" stroke={L} strokeWidth="1.500" /><path d="M11 11l4 4" stroke={L} strokeWidth="2.200" /><path d="M3 5h7v5M5 7.500h3V11M3 5v3" stroke={B} strokeWidth="1.800" /></> },
  { name: "窗口", on: true, art: <><path d="M5 3h10v6H5z" fill={L} stroke={B} strokeWidth="1.500" /><path d="M1 7h2.500v4H11v3.500H1z" fill={B} /></> },
];

function Toggle({ name, on, children }: { name: string; on?: boolean } & Kids) {
  return (
    <button aria-label={name} aria-pressed={!!on} className={`${on ? "bg-[#2f2f2f]" : ""} flex h-5 w-[22px] shrink-0 items-center justify-center`}>
      {children}
    </button>
  );
}

function StatusBar() {
  return (
    <footer className="flex h-6 shrink-0 items-center bg-[#484848] pr-[3px] text-[11px] text-[#c8c8c8]">
      <span className="w-[260px] pl-[3px]">-936.4761, 2931.9479, 0</span>
      {toggles.map((t) => <Toggle key={t.name} name={t.name} on={t.on}><Svg>{t.art}</Svg></Toggle>)}
      <button className="flex w-[46px] items-center gap-[2px] whitespace-nowrap pl-1">
        <Svg w={14} h={15}><Compass2D /></Svg>1:1<Chevron />
      </button>
      <Toggle name="注释可见性"><Svg><g transform="translate(0 1)"><Compass2D /></g><Bulb x={11} y={0} s={0.900} /></Svg></Toggle>
      <Toggle name="自动缩放"><Svg><g transform="translate(0 1)"><Compass2D c="#7a7a7a" /></g><path d="M14 1l-2 3h2l-1 3" stroke="#7a7a7a" /></Svg></Toggle>
      <Toggle name="透明度" on>
        <Svg w={13} h={13}>
          <rect width="13" height="13" fill="#ddd" />
          <path d="M2 3h9M2 7h9M2 11h9" stroke="#222" strokeWidth="2" strokeDasharray="2 2" />
          <path d="M4 5h7M4 9h7" stroke="#222" strokeWidth="2" strokeDasharray="2 2" />
        </Svg>
      </Toggle>
      <Toggle name="特性面板"><Svg w={14} h={15}><path d="M0 0h14v15H0z" fill="#d8d8d8" /><path d="M2 3.500h6M9.500 3.500H12M2 7.500h6M9.500 7.500H12M2 11.500h6M9.500 11.500H12" stroke="#333" strokeWidth="1.600" /></Svg></Toggle>
      <Toggle name="清理" on><Svg w={14} h={14}><path d="M11.500 3A6 6 0 1 0 13 8M12.500 .5v4h-4M7 3.500v7M3.500 7h7" stroke={L} strokeWidth="1.500" /></Svg></Toggle>
      <div className="ml-auto flex items-center">
        <Toggle name="设置"><Svg w={13} h={13}><circle cx="6.500" cy="6.500" r="3.500" stroke={L} strokeWidth="3" /><circle cx="6.500" cy="6.500" r="5.500" stroke={L} strokeWidth="2" strokeDasharray="2.200 2.100" /></Svg></Toggle>
        <Toggle name="锁定"><Svg w={12} h={12}><path d="M0 5h8v6H0z" fill={B} /><path d="M7 5V3a2 2 0 0 1 4.300 0v2" stroke={B} strokeWidth="1.400" /><path d="M3 7h2v2H3z" fill="#333" /></Svg></Toggle>
        <Toggle name="提示"><Svg w={9} h={13}><Bulb x={0} y={0} s={1.700} /></Svg></Toggle>
        <Toggle name="性能"><Svg w={14} h={13}><path d="M1 0h8v9H1zM0 2h1v5H0z" fill={B} /><circle cx="9" cy="7" r="3.500" stroke={L} strokeWidth="1.300" fill="#5c6b80" /><path d="M11.500 9.500l2.500 3" stroke={L} strokeWidth="1.600" /></Svg></Toggle>
        <Toggle name="全屏"><Svg w={12} h={12}><path d="M.6.6h10.800v10.800H.6zM7 3h2v2M5 9H3V7" stroke={L} strokeWidth="1.200" /></Svg></Toggle>
        <span className="pl-[2px]">GstarCAD</span>
      </div>
    </footer>
  );
}

export default function App() {
  return (
    <div className="relative flex h-screen flex-col overflow-hidden bg-[#404040] font-['Noto_Sans','Noto_Sans_CJK_SC',sans-serif] text-[13px] text-[#e4e4e4]">
      <TitleBar />
      <MenuBar />
      <button aria-label="应用程序菜单" className="absolute left-[5px] top-[-2px] flex h-9 w-[35px] items-center justify-center rounded-full bg-white">
        <Svg w={25} h={25}>
          <path d="M8 2h16l-1.500 4.500H10c-1.500 0-2 .8-2.400 2.500L6 15.500c-.4 1.700 0 2.500 1.500 2.500H15l1-3.500h-5.500l1-4H23L20.500 19c-.8 2.500-2 3.500-4 3.500H4c-2.500 0-3.500-1.500-3-4L3.500 6C4 3.500 5.500 2 8 2z" fill="#1f5cff" />
          <path d="M8 2C5.500 2 4 3.500 3.500 6l-1 5 4.700-.5L7.600 9C8 7.300 8.500 6.500 10 6.500L13 2z" fill="#2a9bf0" />
        </Svg>
      </button>

      <div className="flex h-[94px] shrink-0 gap-[5px] border-b-2 border-[#2b2b2b] bg-[#333] px-[5px] pb-[3px] pt-1">
        <DrawPanel />
        <ModifyPanel />
        <LayerPanel />
        <AnnotatePanel />
        <BlockPanel />
        <PropertiesPanel />
        <GroupPanel />
        <UtilityPanel />
        <ClipboardPanel />
      </div>

      <div className="mt-[2px] flex h-5 shrink-0 items-end border-t border-[#2b2b2b] pl-[6px] pr-3">
        <button aria-label="上一个文档" className="mb-[5px]"><Svg w={6} h={9}><path d="M5 .5v8L1 4.500z" stroke="#666" /></Svg></button>
        <div className="relative ml-[5px] flex h-[18px] w-[116px] items-center">
          <svg className="absolute inset-0" width="116" height="18" aria-hidden="true"><path d="M0 18C6 10 5 1 14 .5h90c7 0 6 12 12 17.500z" fill="#333" stroke="#5a5a5a" strokeWidth=".6" /></svg>
          <button className="relative flex-1 pl-[11px] text-left text-[11px] font-bold leading-4 text-[#e8e8e8]">Drawing1.dwg</button>
          <button aria-label="关闭文档" className="relative mr-[5px] mt-[2px]"><Svg w={8} h={8}><path d="M.5 .5l7 7M7.500 .5l-7 7" stroke="#a0a0a0" strokeWidth="1.300" /></Svg></button>
        </div>
        <button aria-label="下一个文档" className="mb-[5px] ml-auto"><Svg w={6} h={9}><path d="M1 .5v8l4-4z" stroke="#666" /></Svg></button>
      </div>

      <div className="flex min-h-0 flex-1 flex-col border-b-2 border-[#5a5a5a] bg-[#555] pl-[3px] pr-[3px] pt-[2px]">
        <main className="flex min-h-0 flex-1 flex-col border-2 border-b-white border-l-[#8c8c8c] border-r-[#f0f0f0] border-t-[#909090]">
          <div className="relative min-h-0 flex-1 border-2 border-b-white border-l-[#8c8c8c] border-r-white border-t-[#909090] bg-[#212830]">
            <Grid />
            <Compass />
            <InputMethodBar />
          </div>
          <LayoutTabs />
        </main>
      </div>

      <div className="shrink-0 bg-[#333]">
        <CommandArea />
        <div className="h-1" />
      </div>
      <StatusBar />
      <div className="flex h-2 shrink-0 overflow-hidden bg-[#1a2a26] text-xs leading-[14px] text-white">
        <span className="ml-[254px] w-[153px] bg-[#a5622a]" />
        <span className="ml-auto w-[153px] bg-[#465550]" />
        <span className="w-[283px] pl-[177px] pt-[3px]">14:54</span>
      </div>
    </div>
  );
}
